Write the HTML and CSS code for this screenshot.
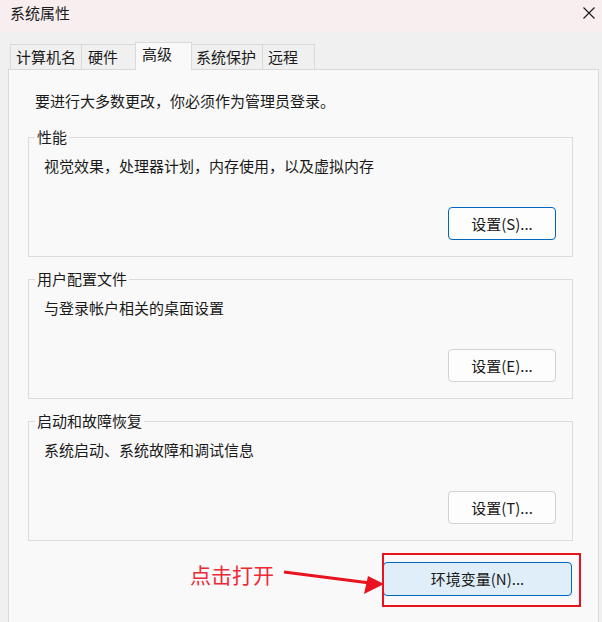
FILE: index.html
```html
<!DOCTYPE html>
<html>
<head>
    <meta charset="utf-8">
    <meta name="viewport" content="width=device-width, initial-scale=1">
    <link rel="stylesheet" href="styles.css">
</head>

<body>
    <div class="window">
        <div class="titlebar">
            <span class="title">系统属性</span>
            <svg class="close" width="12" height="12" viewBox="0 0 12 12">
                <path d="M0.5 0.5 L11.5 11.5 M11.5 0.5 L0.5 11.5" stroke="#1a1a1a" stroke-width="1.1" fill="none"/>
            </svg>
        </div>

        <div class="tabs">
            <div class="tab tab-name">计算机名</div>
            <div class="tab tab-hw">硬件</div>
            <div class="tab tab-adv active">高级</div>
            <div class="tab tab-protect">系统保护</div>
            <div class="tab tab-remote">远程</div>
        </div>

        <div class="panel">
            <p class="notice">要进行大多数更改，你必须作为管理员登录。</p>

            <fieldset class="group">
                <legend>性能</legend>
                <div class="group-body">
                    <p>视觉效果，处理器计划，内存使用，以及虚拟内存</p>
                    <button class="btn focused">设置(S)...</button>
                </div>
            </fieldset>

            <fieldset class="group">
                <legend>用户配置文件</legend>
                <div class="group-body">
                    <p>与登录帐户相关的桌面设置</p>
                    <button class="btn">设置(E)...</button>
                </div>
            </fieldset>

            <fieldset class="group">
                <legend>启动和故障恢复</legend>
                <div class="group-body">
                    <p>系统启动、系统故障和调试信息</p>
                    <button class="btn">设置(T)...</button>
                </div>
            </fieldset>

            <div class="actions">
                <button class="btn env">环境变量(N)...</button>
            </div>
        </div>

        <!-- 标注 -->
        <div class="callout-text">点击打开</div>
        <svg class="callout-arrow" width="110" height="35" viewBox="0 0 110 35">
            <line x1="4" y1="7" x2="90" y2="18" stroke="#e8131f" stroke-width="3"/>
            <polygon points="104,19 88,11 84,29" fill="#e8131f"/>
        </svg>
        <div class="callout-box"></div>
    </div>
</body>
</html>
```

FILE: styles.css
```css
html, body {
    margin: 0;
    padding: 0;
}

body {
    background: #f0f0f0;
    font-family: "Noto Sans CJK SC", "Noto Sans", sans-serif;
    font-size: 15px;
    color: #1a1a1a;
    overflow: hidden;
}

.window {
    position: relative;
    width: 602px;
    height: 622px;
    overflow: hidden;
}

/* 标题栏 */
.titlebar {
    height: 32px;
    box-sizing: border-box;
    background: #f8eef0;
    display: flex;
    justify-content: space-between;
    align-items: flex-start;
    padding: 3px 7px 0 10px;
}

.title {
    line-height: 20px;
}

.close {
    margin-top: 4px;
}

/* 选项卡 */
.tabs {
    display: flex;
    align-items: flex-end;
    height: 27px;
    margin-top: 10px;
    padding-left: 10px;
}

.tab {
    box-sizing: border-box;
    height: 25px;
    line-height: 20px;
    padding: 2px 0 0 6px;
    margin-right: -1px;
    border: 1px solid #dadada;
    border-bottom: none;
    background: #f0f0f0;
    white-space: nowrap;
}

.tab-name { width: 72px; padding-left: 5px; }
.tab-hw { width: 55px; }
.tab-adv { width: 57px; }
.tab-protect { width: 72px; padding-left: 4px; }
.tab-remote { width: 53px; padding-left: 5px; }

.tab.active {
    position: relative;
    height: 28px;
    margin-bottom: -1px;
    padding-top: 1px;
    background: #f9f9f9;
}

/* 主面板 */
.panel {
    box-sizing: border-box;
    width: 591px;
    height: 560px;
    margin-left: 8px;
    border: 1px solid #d9d9d9;
    background: #f9f9f9;
    padding: 21px 25px 0 19px;
}

.notice {
    margin: 0 0 17px 7px;
    line-height: 20px;
}

.group {
    margin: 0 0 13px;
    padding: 0;
    min-width: 0;
    border: 1px solid #dcdcdc;
}

.group legend {
    margin-left: 6px;
    padding: 0 2px;
    line-height: 18px;
}

.group-body {
    box-sizing: border-box;
    height: 110px;
    display: flex;
    flex-direction: column;
    padding: 10px 16px 16px 15px;
}

.group-body p {
    margin: 0;
    line-height: 20px;
}

.btn {
    font: inherit;
    color: #1a1a1a;
    box-sizing: border-box;
    width: 108px;
    height: 33px;
    line-height: 20px;
    padding: 0;
    border: 1px solid #d1d1d1;
    border-radius: 4px;
    background: #fdfdfd;
}

.group-body .btn {
    margin-top: auto;
    align-self: flex-end;
}

.btn.focused {
    border-color: #0067c0;
}

.actions {
    display: flex;
    justify-content: flex-end;
    margin-top: 21px;
    padding-right: 1px;
}

.btn.env {
    width: 189px;
    height: 34px;
    background: #e0eef9;
    border-color: #0067c0;
}

/* 红色标注 */
.callout-text {
    position: absolute;
    left: 190px;
    top: 560px;
    font-size: 21px;
    line-height: 28px;
    color: #ec2936;
}

.callout-arrow {
    position: absolute;
    left: 280px;
    top: 565px;
}

.callout-box {
    position: absolute;
    left: 382px;
    top: 553px;
    width: 199px;
    height: 54px;
    box-sizing: border-box;
    border: 2px solid #e8131f;
}
```
